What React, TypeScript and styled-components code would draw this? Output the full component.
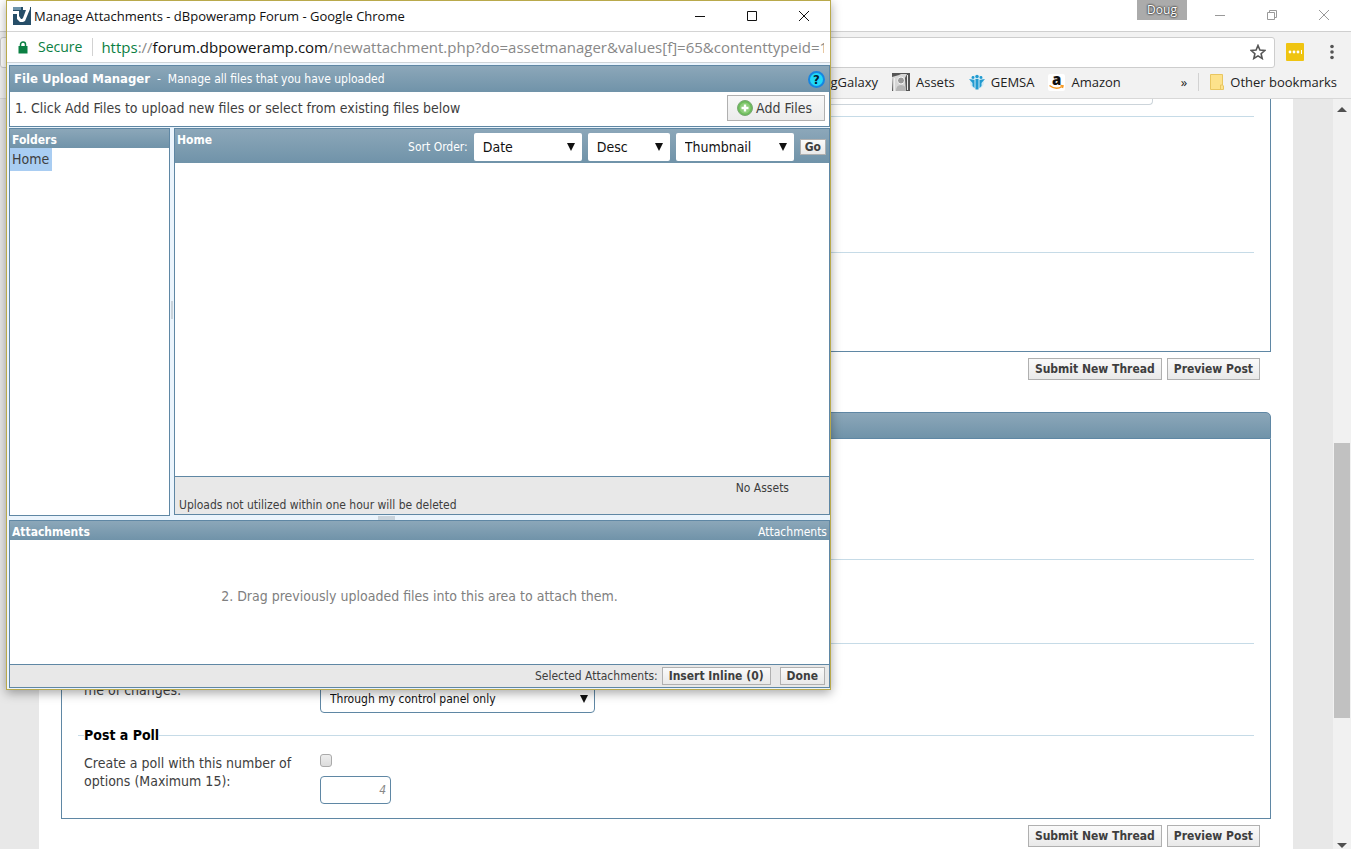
import React from 'react';
import styled, { createGlobalStyle } from 'styled-components';

const uiFont = '"Open Sans", "Noto Sans", sans-serif';
const forumFont = '"DejaVu Sans Condensed", "DejaVu Sans", sans-serif';
const edge = '#5f87a4';
const bar = 'linear-gradient(#8ca7b9, #7093a9)';

const GlobalStyle = createGlobalStyle`
  * { box-sizing: border-box; }
  body { margin: 0; background: #fff; font-family: ${forumFont}; color: #3e3e3e; }
  button, input, select { font-family: inherit; color: inherit; margin: 0; }
`;

/* ---------- main browser window ---------- */

const Desktop = styled.div`
  position: relative;
  display: flex;
  flex-direction: column;
  height: 100vh;
  min-height: 700px;
  overflow: hidden;
`;

const BrowserTitle = styled.header`
  display: flex;
  justify-content: flex-end;
  align-items: flex-start;
  flex: none;
  height: 32px;
  padding-right: 1px;
  border-bottom: 1px solid #cfcfcf;
`;

const Profile = styled.button`
  width: 50px;
  height: 20px;
  margin-right: 7px;
  padding: 0;
  border: 0;
  background: #ababab;
  color: #fff;
  font: 12px/18px ${uiFont};
  text-shadow: 0 0 2px #222, 0 0 2px #222;
`;

const WindowButton = styled.button<{ $dim?: boolean }>`
  display: grid;
  place-items: center;
  width: 52px;
  height: 30px;
  padding: 0;
  border: 0;
  background: none;
  color: ${(p) => (p.$dim ? '#999' : '#111')};
`;

const Toolbar = styled.div`
  display: flex;
  align-items: center;
  flex: none;
  height: 36px;
  padding: 4px 11px 0 0;
  background: #f2f2f2;
`;

const Omnibox = styled.div`
  display: flex;
  align-items: center;
  flex: 1;
  height: 31px;
  padding-right: 8px;
  border: 1px solid #cdcdcd;
  border-radius: 3px;
  background: #fff;
`;

const OmniboxInput = styled.input`
  flex: 1;
  min-width: 0;
  border: 0;
  outline: 0;
  background: none;
`;

const IconButton = styled.button`
  display: grid;
  place-items: center;
  padding: 0;
  border: 0;
  background: none;
  color: #555;
`;

const ToolIcons = styled.div`
  display: flex;
  align-items: center;
  gap: 20px;
  padding-left: 11px;
`;

const Bookmarks = styled.nav`
  display: flex;
  justify-content: flex-end;
  align-items: center;
  flex: none;
  height: 31px;
  gap: 14px;
  padding: 0 14px 2px 0;
  border-bottom: 1px solid #d8d8d8;
  background: #f2f2f2;
`;

const Bookmark = styled.a`
  display: flex;
  align-items: center;
  gap: 6px;
  color: #222;
  font: 13px/18px ${uiFont};
  text-decoration: none;
  white-space: nowrap;
`;

const BookmarkEnd = styled.div`
  display: flex;
  align-items: center;
  gap: 11px;
  margin-left: 46px;
`;

const Divider = styled.span`
  width: 1px;
  height: 18px;
  background: #d2d2d2;
`;

const Viewport = styled.div`
  display: flex;
  flex: 1;
  min-height: 0;
  background: #e8e8e8;
`;

const Page = styled.main`
  flex: 1;
  min-width: 0;
  margin: 0 40px 0 39px;
  padding: 0 22px;
  overflow: hidden;
  background: #fff;
`;

const Panel = styled.section`
  padding: 0 16px;
  border: 1px solid ${edge};
  border-top: 0;
`;

const PanelBar = styled.div`
  height: 27px;
  border: 1px solid ${edge};
  border-radius: 5px 5px 0 0;
  background: ${bar};
`;

const Block = styled.div<{ $space: number; $line?: boolean }>`
  min-height: ${(p) => p.$space}px;
  border-top: ${(p) => (p.$line ? '1px solid #c6dbe7' : '0')};
`;

const TitleInput = styled.input`
  display: block;
  width: calc(100% - 101px);
  height: 6px;
  border: 1px solid #ccd4da;
  border-top: 0;
  border-radius: 0 0 4px 4px;
`;

const Actions = styled.div<{ $gap: number }>`
  display: flex;
  justify-content: flex-end;
  gap: 5px;
  padding: 6px 11px ${(p) => p.$gap}px;
`;

const Button = styled.button`
  height: 22px;
  padding: 0 6px;
  border: 1px solid #b0b0b0;
  background: linear-gradient(#fafafa, #e9e9e9);
  color: #3e3e3e;
  font-size: 12px;
  font-weight: bold;
  line-height: 18px;
  white-space: nowrap;
`;

const FormRow = styled.div`
  display: grid;
  grid-template-columns: 236px 1fr;
  padding-left: 6px;
  font-size: 14px;
  line-height: 18px;
`;

const NotifyRow = styled(FormRow)`
  padding-top: 37px;

  > span { margin-top: 4px; }
`;

const PollRow = styled(FormRow)`
  padding-top: 10px;
  padding-bottom: 14px;
`;

const RowLabel = styled.label`
  padding-right: 20px;
`;

const Fieldset = styled.fieldset`
  min-width: 0;
  margin: 0;
  padding: 0;
  border: 0;
  border-top: 1px solid #c6dbe7;
`;

const Legend = styled.legend`
  margin-left: 6px;
  padding: 0;
  color: #000;
  font-size: 14px;
  font-weight: bold;
  line-height: 18px;
`;

const PollFields = styled.div`
  display: flex;
  flex-direction: column;
  align-items: flex-start;
  gap: 9px;
`;

const Check = styled.input`
  appearance: none;
  width: 12px;
  height: 13px;
  border: 1px solid #aaa;
  border-radius: 3px;
  background: linear-gradient(#eee, #dcdcdc);
`;

const NumberBox = styled.input`
  width: 71px;
  height: 28px;
  padding: 0 4px;
  border: 1px solid ${edge};
  border-radius: 4px;
  color: #888;
  font-size: 12px;
  font-style: italic;
  text-align: right;
`;

const Scrollbar = styled.div`
  display: flex;
  flex-direction: column;
  flex: none;
  width: 18px;
  background: #f1f1f1;
`;

const ScrollArrow = styled.div<{ $h: number }>`
  display: grid;
  place-items: center;
  flex: none;
  height: ${(p) => p.$h}px;
`;

const ScrollSpace = styled.div<{ $grow: number }>`
  flex: ${(p) => p.$grow};
`;

const Thumb = styled.div`
  flex: 275;
  margin: 0 1px;
  background: #c1c1c1;
`;

/* ---------- drop-down ---------- */

const SelectBox = styled.span<{ $w: number; $outline?: boolean; $small?: boolean }>`
  position: relative;
  display: block;
  width: ${(p) => p.$w}px;

  select {
    appearance: none;
    display: block;
    width: 100%;
    height: 28px;
    padding: 0 20px 0 9px;
    border: ${(p) => (p.$outline ? `1px solid ${edge}` : '0')};
    border-radius: ${(p) => (p.$outline ? 4 : 2)}px;
    background: #fff;
    color: #111;
    font-size: ${(p) => (p.$small ? 12 : 14)}px;
  }
  svg {
    position: absolute;
    right: 7px;
    top: 10px;
    pointer-events: none;
  }
`;

type SelectProps = { label: string; value: string; width: number; outline?: boolean; small?: boolean; id?: string };

const Select = ({ label, value, width, outline, small, id }: SelectProps) => (
  <SelectBox $w={width} $outline={outline} $small={small}>
    <select aria-label={label} id={id} defaultValue={value}>
      <option>{value}</option>
    </select>
    <svg width="8" height="8" viewBox="0 0 8 8"><path d="M0 0h8L4 8z" fill="#111" /></svg>
  </SelectBox>
);

/* ---------- pop-up window ---------- */

const Popup = styled.div`
  position: absolute;
  top: 0;
  left: 6px;
  display: flex;
  flex-direction: column;
  width: 825px;
  max-width: calc(100% - 12px);
  border: 1px solid #b9a94b;
  background: #fff;
  box-shadow: 0 3px 10px rgba(0, 0, 0, 0.35);
`;

const PopupTitle = styled.div`
  display: flex;
  align-items: center;
  height: 31px;
  padding-left: 6px;
  border-bottom: 1px solid #d4d4d4;
  color: #111;
  font: 13px/18px ${uiFont};
`;

const PopupCaption = styled.span`
  flex: 1;
  padding-left: 3px;
`;

const Address = styled.div`
  display: flex;
  align-items: center;
  height: 31px;
  padding: 0 6px 0 11px;
  border-bottom: 1px solid #cfd4d8;
  font: 15px/20px ${uiFont};
  color: #888;
`;

const Secure = styled.span`
  margin: 0 10px;
  color: #0b8043;
  font-size: 14px;
`;

const Url = styled.span`
  flex: 1;
  min-width: 0;
  margin-left: 8px;
  overflow: hidden;
  white-space: nowrap;

  b { color: #111; font-weight: normal; }
  i { color: #0b8043; font-style: normal; }
`;

const Manager = styled.div`
  display: flex;
  flex-direction: column;
  padding: 2px 0 1px 2px;
  background: #ebf4fc;
`;

const Box = styled.section`
  display: flex;
  flex-direction: column;
  border: 1px solid ${edge};
  background: #fff;
`;

const ManagerTitle = styled.h1`
  display: flex;
  align-items: center;
  height: 26px;
  margin: 0;
  padding: 0 4px;
  background: ${bar};
  color: #fff;
  font-size: 13px;
  line-height: 18px;
`;

const Subtitle = styled.span`
  flex: 1;
  padding-left: 7px;
  font-size: 12px;
  font-weight: normal;
`;

const Help = styled.a`
  display: grid;
  place-items: center;
  width: 17px;
  height: 17px;
  border: 2px solid #1685e0;
  border-radius: 50%;
  background: #20d8fa;
  color: #062033;
  font-size: 13px;
  font-weight: bold;
  line-height: 14px;
  text-decoration: none;
`;

const AddRow = styled.div`
  display: flex;
  align-items: center;
  justify-content: space-between;
  height: 34px;
  padding: 0 4px 2px 5px;
  font-size: 14px;
`;

const AddButton = styled.button`
  display: flex;
  align-items: center;
  gap: 3px;
  height: 26px;
  padding: 0 12px 0 9px;
  border: 1px solid #b0b0b0;
  background: linear-gradient(#f8f8f8, #ececec);
  font-size: 14px;
`;

const Columns = styled.div`
  display: flex;
  height: 388px;
  margin-top: 1px;
`;

const Folders = styled(Box)`
  width: 161px;
`;

const SmallBar = styled.h2`
  display: flex;
  justify-content: space-between;
  height: 19px;
  margin: 0;
  padding: 2px 2px 0;
  background: ${bar};
  color: #fff;
  font-size: 12px;
  line-height: 18px;
`;

const BarLink = styled.a`
  color: #fff;
  font-weight: normal;
  text-decoration: none;
`;

const Folder = styled.a`
  align-self: flex-start;
  padding: 0 3px 0 2px;
  background: #a9cdf2;
  color: #3e3e3e;
  font-size: 14px;
  line-height: 23px;
  text-decoration: none;
`;

const Splitter = styled.div`
  display: grid;
  place-items: center;
  width: 4px;

  span { width: 2px; height: 18px; margin-top: -24px; background: #c9d3db; }
`;

const RowSplitter = styled.div`
  display: flex;
  justify-content: center;
  height: 4px;
  padding-right: 66px;

  span { width: 17px; height: 4px; background: #c9d3db; }
`;

const Assets = styled(Box)`
  flex: 1;
  margin-bottom: 1px;
`;

const AssetsBar = styled.div`
  display: flex;
  align-items: center;
  height: 34px;
  gap: 6px;
  padding: 2px 3px 0 2px;
  background: ${bar};
  color: #fff;
  font-size: 12px;
`;

const AssetsTitle = styled.h2`
  align-self: flex-start;
  flex: 1;
  margin: 0;
  font-size: 12px;
  line-height: 18px;
`;

const SortLabel = styled.span`
  line-height: 18px;
`;

const GoButton = styled(Button)`
  height: 16px;
  padding: 0 4px;
  line-height: 14px;
`;

const AssetsArea = styled.div`
  flex: 1;
`;

const AssetsFooter = styled.div`
  height: 38px;
  padding: 3px 4px 0;
  border-top: 1px solid ${edge};
  background: #e8e8e8;
  font-size: 12px;
  line-height: 17px;
`;

const Count = styled.div`
  padding-right: 36px;
  text-align: right;
`;

const DropArea = styled.div`
  display: grid;
  place-items: center;
  min-height: 124px;
  padding-bottom: 13px;
  color: #808080;
  font-size: 14px;
`;

const AttachFooter = styled.div`
  display: flex;
  align-items: center;
  justify-content: flex-end;
  height: 23px;
  padding-right: 4px;
  border-top: 1px solid ${edge};
  background: #e8e8e8;
  font-size: 12px;
`;

const FooterButton = styled(Button)`
  height: 18px;
  margin-left: 4px;
  line-height: 15px;

  & + & { margin-left: 9px; }
`;

/* ---------- icons ---------- */

const MinIcon = () => (
  <svg width="12" height="12" viewBox="0 0 12 12"><path d="M1 6.5h10" stroke="currentColor" /></svg>
);
const MaxIcon = () => (
  <svg width="12" height="12" viewBox="0 0 12 12"><path d="M1.500 1.500h9v9h-9z" fill="none" stroke="currentColor" /></svg>
);
const RestoreIcon = () => (
  <svg width="12" height="12" viewBox="0 0 12 12"><path d="M1.500 3.500h7v7h-7zM3.500 3.500v-2h7v7h-2" fill="none" stroke="currentColor" /></svg>
);
const CloseIcon = () => (
  <svg width="12" height="12" viewBox="0 0 12 12"><path d="M1 1l10 10M11 1L1 11" stroke="currentColor" /></svg>
);
const ForumIcon = () => (
  <svg width="18" height="18" viewBox="0 0 18 18">
    <path d="M0 0h18v18H0z" fill="#264e68" />
    <path d="M0 0h8v3H0z" fill="#6d93aa" />
    <path d="M0 4h6v5l2 3h1l1-1 3-8h-3V0h7v2l-5 12-2 1H7l-3-3V7H0z" fill="#fff" />
  </svg>
);
const LockIcon = () => (
  <svg width="10" height="13" viewBox="0 0 10 13">
    <path d="M0.500 5h9v7.500h-9z" fill="#0b8043" />
    <path d="M2.500 6V3.500a2.500 2.500 0 0 1 5 0V6" fill="none" stroke="#0b8043" strokeWidth="1.500" />
  </svg>
);
const StarIcon = () => (
  <svg width="16" height="16" viewBox="0 0 16 16">
    <path d="M8 1.500l1.900 4.600 4.900.4-3.700 3.200 1.100 4.800L8 11.900l-4.200 2.600 1.100-4.800L1.200 6.500l4.900-.4z" fill="none" stroke="#555" strokeWidth="1.600" />
  </svg>
);
const PassIcon = () => (
  <svg width="18" height="18" viewBox="0 0 18 18">
    <rect width="18" height="18" rx="1" fill="#efc411" />
    <g fill="#fff"><circle cx="4" cy="9" r="1.400" /><circle cx="8" cy="9" r="1.400" /><circle cx="12" cy="9" r="1.400" /><path d="M15 7h1v4h-1z" /></g>
  </svg>
);
const MenuIcon = () => (
  <svg width="16" height="16" viewBox="0 0 16 16" fill="#555"><circle cx="8" cy="2.500" r="1.800" /><circle cx="8" cy="8" r="1.800" /><circle cx="8" cy="13.500" r="1.800" /></svg>
);
const AssetsIcon = () => (
  <svg width="18" height="18" viewBox="0 0 18 18">
    <path d="M0 0h18v18H0z" fill="#555" />
    <path d="M0 4l7-2 2-1h6l-2 4 1 13h-3l-1-4H7l-3 4H1z" fill="#d6d6d6" />
    <circle cx="9" cy="7.500" r="3.500" fill="#999" stroke="#f5f5f5" />
    <path d="M4 18q0-6 5-6t5 6z" fill="#b5b5b5" />
    <path d="M2 5h1v13H2zM15 2h1v15h-1z" fill="#eee" />
  </svg>
);
const GemsaIcon = () => (
  <svg width="16" height="16" viewBox="0 0 16 16">
    <circle cx="8" cy="8" r="7" fill="#cfe9f4" />
    <g fill="#209ad0"><circle cx="8" cy="2.500" r="1.700" /><circle cx="4" cy="3.500" r="1.400" /><circle cx="12" cy="3.500" r="1.400" />
      <path d="M6.500 5h3v10.500h-3zM0 5l5.500 1v8L3.500 12V9zM16 5l-5.500 1v8l2-2V9z" /></g>
  </svg>
);
const AmazonIcon = () => (
  <svg width="17" height="17" viewBox="0 0 17 17">
    <rect width="17" height="17" rx="2" fill="#fff" />
    <text x="4" y="11" fontFamily="Open Sans" fontWeight="800" fontSize="15" fill="#111">a</text>
    <path d="M1.500 11.500q6.500 5 12.500 1M12.500 11.500l2.500.3-.6 2.200" fill="none" stroke="#f59a23" strokeWidth="1.500" />
  </svg>
);
const FolderIcon = () => (
  <svg width="14" height="16" viewBox="0 0 14 16">
    <path d="M.5.5h12v10.500l1 1v3.500H.5z" fill="#fde28b" stroke="#e9c660" /><path d="M10.500 15v-4h2" fill="none" stroke="#e9c660" />
  </svg>
);
const PlusIcon = () => (
  <svg width="16" height="16" viewBox="0 0 16 16">
    <circle cx="8" cy="8" r="7.500" fill="#6cbb5a" stroke="#7aa873" /><circle cx="8" cy="8" r="5.500" fill="#8bcc78" />
    <path d="M8 4.500v7M4.500 8h7" stroke="#fff" strokeWidth="2.400" />
  </svg>
);

const ThreadButtons = ({ gap }: { gap: number }) => (
  <Actions $gap={gap}>
    <Button>Submit New Thread</Button>
    <Button>Preview Post</Button>
  </Actions>
);

export default function App() {
  return (
    <Desktop>
      <GlobalStyle />
      <BrowserTitle>
        <Profile>Doug</Profile>
        <WindowButton $dim aria-label="Minimize"><MinIcon /></WindowButton>
        <WindowButton $dim aria-label="Restore"><RestoreIcon /></WindowButton>
        <WindowButton $dim aria-label="Close"><CloseIcon /></WindowButton>
      </BrowserTitle>
      <Toolbar>
        <Omnibox>
          <OmniboxInput aria-label="Address" />
          <IconButton aria-label="Bookmark this page"><StarIcon /></IconButton>
        </Omnibox>
        <ToolIcons>
          <IconButton aria-label="Passwords"><PassIcon /></IconButton>
          <IconButton aria-label="Menu"><MenuIcon /></IconButton>
        </ToolIcons>
      </Toolbar>
      <Bookmarks>
        <Bookmark href="#">gGalaxy</Bookmark>
        <Bookmark href="#"><AssetsIcon />Assets</Bookmark>
        <Bookmark href="#"><GemsaIcon />GEMSA</Bookmark>
        <Bookmark href="#"><AmazonIcon />Amazon</Bookmark>
        <BookmarkEnd>
          <Bookmark href="#">»</Bookmark>
          <Divider />
          <Bookmark href="#"><FolderIcon />Other bookmarks</Bookmark>
        </BookmarkEnd>
      </Bookmarks>

      <Viewport>
        <Page>
          <Panel>
            <Block $space={17}><TitleInput aria-label="Title" /></Block>
            <Block $space={136} $line />
            <Block $space={99} $line />
          </Panel>
          <ThreadButtons gap={32} />
          <PanelBar />
          <Panel>
            <Block $space={120} />
            <Block $space={84} $line />
            <Block $space={83} $line>
              <NotifyRow>
                <RowLabel htmlFor="notify">me of changes:</RowLabel>
                <Select id="notify" label="Notification type" value="Through my control panel only" width={275} outline small />
              </NotifyRow>
            </Block>
            <Fieldset>
              <Legend>Post a Poll</Legend>
              <PollRow>
                <RowLabel htmlFor="options">Create a poll with this number of options (Maximum 15):</RowLabel>
                <PollFields>
                  <Check type="checkbox" aria-label="Create a poll" />
                  <NumberBox id="options" defaultValue="4" />
                </PollFields>
              </PollRow>
            </Fieldset>
          </Panel>
          <ThreadButtons gap={6} />
        </Page>
        <Scrollbar>
          <ScrollArrow $h={20}><svg width="10" height="5" viewBox="0 0 10 5"><path d="M0 5l5-5 5 5z" fill="#505050" /></svg></ScrollArrow>
          <ScrollSpace $grow={324} />
          <Thumb />
          <ScrollSpace $grow={123} />
          <ScrollArrow $h={8}><svg width="10" height="5" viewBox="0 0 10 5"><path d="M0 0l5 5 5-5z" fill="#505050" /></svg></ScrollArrow>
        </Scrollbar>
      </Viewport>

      <Popup role="dialog" aria-label="Manage Attachments">
        <PopupTitle>
          <ForumIcon />
          <PopupCaption>Manage Attachments - dBpoweramp Forum - Google Chrome</PopupCaption>
          <WindowButton aria-label="Minimize"><MinIcon /></WindowButton>
          <WindowButton aria-label="Maximize"><MaxIcon /></WindowButton>
          <WindowButton aria-label="Close"><CloseIcon /></WindowButton>
        </PopupTitle>
        <Address>
          <LockIcon />
          <Secure>Secure</Secure>
          <Divider />
          <Url><i>https</i>://<b>forum.dbpoweramp.com</b>/newattachment.php?do=assetmanager&amp;values[f]=65&amp;contenttypeid=1&amp;</Url>
        </Address>
        <Manager>
          <Box>
            <ManagerTitle>
              File Upload Manager
              <Subtitle>-&nbsp; Manage all files that you have uploaded</Subtitle>
              <Help href="#">?</Help>
            </ManagerTitle>
            <AddRow>
              <span>1. Click Add Files to upload new files or select from existing files below</span>
              <AddButton><PlusIcon />Add Files</AddButton>
            </AddRow>
          </Box>
          <Columns>
            <Folders>
              <SmallBar>Folders</SmallBar>
              <Folder href="#">Home</Folder>
            </Folders>
            <Splitter><span /></Splitter>
            <Assets>
              <AssetsBar>
                <AssetsTitle>Home</AssetsTitle>
                <SortLabel>Sort Order:</SortLabel>
                <Select label="Sort by" value="Date" width={108} />
                <Select label="Direction" value="Desc" width={82} />
                <Select label="View" value="Thumbnail" width={118} />
                <GoButton>Go</GoButton>
              </AssetsBar>
              <AssetsArea />
              <AssetsFooter>
                <Count>No Assets</Count>
                <div>Uploads not utilized within one hour will be deleted</div>
              </AssetsFooter>
            </Assets>
          </Columns>
          <RowSplitter><span /></RowSplitter>
          <Box>
            <SmallBar>Attachments<BarLink href="#">Attachments</BarLink></SmallBar>
            <DropArea>2. Drag previously uploaded files into this area to attach them.</DropArea>
            <AttachFooter>
              <span>Selected Attachments:</span>
              <FooterButton>Insert Inline (0)</FooterButton>
              <FooterButton>Done</FooterButton>
            </AttachFooter>
          </Box>
        </Manager>
      </Popup>
    </Desktop>
  );
}
